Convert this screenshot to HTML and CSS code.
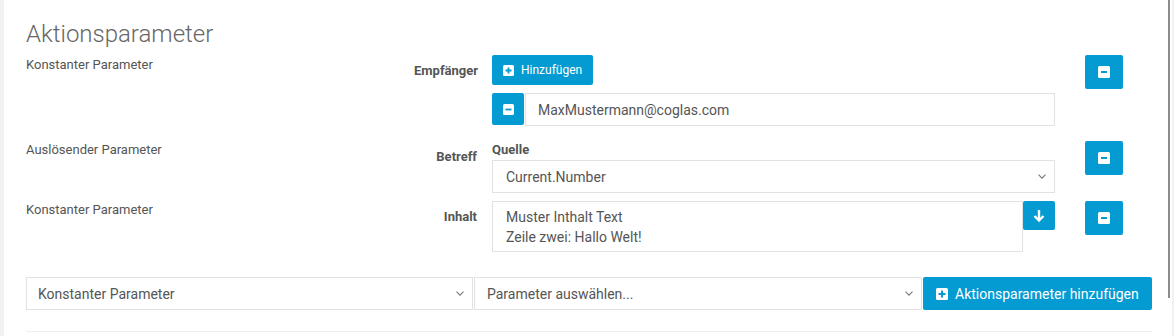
FILE: index.html
```html
<!DOCTYPE html>
<html lang="de">
<head>
    <meta charset="UTF-8">
    <meta name="viewport" content="width=device-width, initial-scale=1.0">
    <title>Aktionsparameter</title>
    <link rel="stylesheet" href="styles.css">
</head>
<body>
    <div class="panel">
        <h2 class="section-title">Aktionsparameter</h2>

        <!-- Empfänger -->
        <div class="param-row row-recipient">
            <div class="param-type">Konstanter Parameter</div>
            <label class="param-label">Empfänger</label>
            <div class="param-control">
                <button class="btn btn-add">
                    <svg class="icon" width="11" height="11" viewBox="0 0 11 11"><rect width="11" height="11" rx="1.5" fill="#fff"/><path d="M5.5 2.5v6M2.5 5.5h6" stroke="#049bd2" stroke-width="1.8"/></svg>
                    Hinzufügen
                </button>
                <div class="input-group">
                    <button class="btn btn-square">
                        <svg width="11" height="11" viewBox="0 0 11 11"><rect width="11" height="11" rx="1.5" fill="#fff"/><path d="M2.5 5.5h6" stroke="#049bd2" stroke-width="1.8"/></svg>
                    </button>
                    <input class="form-control" type="text" value="MaxMustermann@coglas.com">
                </div>
            </div>
            <div class="param-remove">
                <button class="btn btn-remove">
                    <svg width="12" height="12" viewBox="0 0 12 12"><rect width="12" height="12" rx="1.5" fill="#fff"/><path d="M3 6h6" stroke="#049bd2" stroke-width="2"/></svg>
                </button>
            </div>
        </div>

        <!-- Betreff -->
        <div class="param-row row-subject">
            <div class="param-type">Auslösender Parameter</div>
            <label class="param-label">Betreff</label>
            <div class="param-control">
                <div class="control-caption">Quelle</div>
                <select class="form-control select-source">
                    <option>Current.Number</option>
                </select>
            </div>
            <div class="param-remove">
                <button class="btn btn-remove">
                    <svg width="12" height="12" viewBox="0 0 12 12"><rect width="12" height="12" rx="1.5" fill="#fff"/><path d="M3 6h6" stroke="#049bd2" stroke-width="2"/></svg>
                </button>
            </div>
        </div>

        <!-- Inhalt -->
        <div class="param-row row-content">
            <div class="param-type">Konstanter Parameter</div>
            <label class="param-label">Inhalt</label>
            <div class="param-control textarea-group">
                <textarea class="form-control">Muster Inthalt Text
Zeile zwei: Hallo Welt!</textarea>
                <button class="btn btn-expand">
                    <svg width="12" height="13" viewBox="0 0 12 13"><path d="M6 1v10.5M1.5 7l4.5 4.5 4.5-4.5" stroke="#fff" stroke-width="2.4" fill="none"/></svg>
                </button>
            </div>
            <div class="param-remove">
                <button class="btn btn-remove">
                    <svg width="12" height="12" viewBox="0 0 12 12"><rect width="12" height="12" rx="1.5" fill="#fff"/><path d="M3 6h6" stroke="#049bd2" stroke-width="2"/></svg>
                </button>
            </div>
        </div>

        <!-- Neuen Parameter hinzufügen -->
        <div class="add-row">
            <select class="form-control">
                <option>Konstanter Parameter</option>
            </select>
            <select class="form-control">
                <option>Parameter auswählen...</option>
            </select>
            <button class="btn btn-add-param">
                <svg class="icon" width="12" height="12" viewBox="0 0 12 12"><rect width="12" height="12" rx="1.5" fill="#fff"/><path d="M6 2.5v7M2.5 6h7" stroke="#049bd2" stroke-width="2"/></svg>
                Aktionsparameter hinzufügen
            </button>
        </div>

        <hr class="divider">
    </div>
    <div class="scroll-thumb"></div>
</body>
</html>
```

FILE: styles.css
```css
* {
    margin: 0;
    padding: 0;
    box-sizing: border-box;
}

body {
    font-family: 'Roboto', 'Liberation Sans', Arial, sans-serif;
    font-size: 13px;
    line-height: 18px;
    color: #555;
    background-color: #f1f1f1;
    height: 336px;
    overflow: hidden;
    position: relative;
}

.panel {
    margin-left: 4px;
    width: 1168px;
    height: 336px;
    background-color: #fff;
    padding: 20px 20px 0 22px;
}

.section-title {
    font-size: 24px;
    font-weight: 300;
    line-height: 28px;
    color: #666;
    margin-bottom: 7px;
}

/* parameter rows */
.param-row {
    display: flex;
    align-items: flex-start;
}

.row-recipient .param-type {
    padding-top: 1px;
}

.row-subject {
    margin-top: 15px;
}

.row-content {
    margin-top: 8px;
}

.param-type {
    width: 388px;
}

.param-label {
    width: 63px;
    margin-right: 15px;
    padding-top: 7px;
    text-align: right;
    font-weight: 700;
}

.param-control {
    width: 563px;
}

.param-remove {
    margin-left: 30px;
}

.control-caption {
    font-weight: 700;
}

/* buttons */
.btn {
    display: inline-flex;
    align-items: center;
    justify-content: center;
    border: none;
    border-radius: 2px;
    background-color: #049bd2;
    color: #fff;
    font-family: inherit;
    cursor: pointer;
}

.btn-add {
    height: 30px;
    padding: 0 11px;
    gap: 7px;
    font-size: 12px;
}

.btn-square {
    width: 32px;
    height: 32px;
    flex-shrink: 0;
}

.btn-remove {
    width: 38px;
    height: 34px;
}

.btn-expand {
    width: 32px;
    height: 29px;
    flex-shrink: 0;
}

.btn-add-param {
    width: 229px;
    height: 33px;
    padding: 0 12px 0 13px;
    gap: 7px;
    font-size: 14px;
    justify-content: flex-start;
}

/* form controls */
.form-control {
    display: block;
    font-family: inherit;
    font-size: 14px;
    color: #555;
    background-color: #fff;
    border: 1px solid #e2e2e2;
    border-radius: 0;
    outline: none;
}

.input-group {
    display: flex;
    margin-top: 8px;
}

.input-group .form-control {
    flex: 1;
    height: 33px;
    margin-left: 1px;
    padding: 0 12px;
}

select.form-control {
    appearance: none;
    -webkit-appearance: none;
    height: 33px;
    padding: 0 30px 0 13px;
    background-image: url("data:image/svg+xml;utf8,<svg xmlns='http://www.w3.org/2000/svg' width='8' height='5' viewBox='0 0 8 5'><path d='M0.5 0.7l3.5 3.5 3.5-3.5' stroke='%23777' stroke-width='1.1' fill='none'/></svg>");
    background-repeat: no-repeat;
    background-position: right 8px center;
}

.select-source {
    width: 100%;
    margin-top: 1px;
}

.textarea-group {
    display: flex;
    align-items: flex-start;
}

.textarea-group textarea {
    width: 531px;
    height: 51px;
    padding: 5px 13px;
    line-height: 20px;
    resize: none;
}

/* add row */
.add-row {
    display: flex;
    margin-top: 25px;
}

.add-row select.form-control {
    flex: 1;
    min-width: 0;
    padding-left: 11px;
}

.add-row select.form-control + select.form-control {
    margin-left: 1px;
    padding-left: 12px;
}

.add-row .btn-add-param {
    margin-left: 1px;
}

.divider {
    border: none;
    border-top: 1px solid #eee;
    margin-top: 21px;
}

.scroll-thumb {
    position: absolute;
    top: 0;
    left: 1168px;
    width: 2px;
    height: 298px;
    background-color: #8c8c8c;
}
```
